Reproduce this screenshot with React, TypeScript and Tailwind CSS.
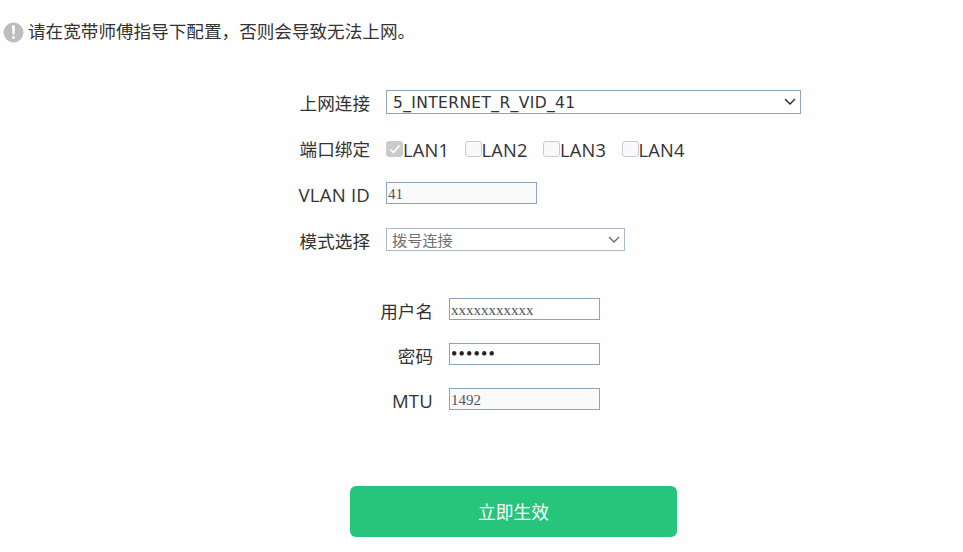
import { useState } from "react";
import type { ReactNode } from "react";

const PORTS = ["LAN1", "LAN2", "LAN3", "LAN4"];

export default function App() {
  const [username, setUsername] = useState("xxxxxxxxxxx");
  const [password, setPassword] = useState("xxxxxx");

  return (
    <div className="h-[552px] w-[963px] overflow-hidden bg-[#fefefe] font-['Open_Sans','Noto_Sans_CJK_SC',sans-serif] text-[17.6px] leading-6 text-[#333]">
      <div className="flex items-center gap-1 pt-[19px] pl-[3px]">
        <NoticeIcon />
        <p className="font-['Noto_Sans_CJK_SC',sans-serif]">请在宽带师傅指导下配置，否则会导致无法上网。</p>
      </div>

      <form onSubmit={(e) => e.preventDefault()}>
        <div className="pt-[47px]">
          <Row label="上网连接" labelWidth="w-[370px]" height="h-[46px]">
            <Select value="5_INTERNET_R_VID_41" className="h-6 w-[415px] border-[#8ea4b8] pl-1.5 font-['DejaVu_Sans',sans-serif] text-[15.5px] tracking-[0.37px] text-[#333]" />
          </Row>
          <Row label="端口绑定" labelWidth="w-[370px]" height="h-[46px]">
            <div className="flex pt-[5px]">
              {PORTS.map((port, i) => (
                <label key={port} className="flex w-[78.5px] items-start">
                  <Checkbox checked={i === 0} />
                  <span className="text-[18.3px] leading-[18px] tracking-[0.2px]">{port}</span>
                </label>
              ))}
            </div>
          </Row>
          <Row label="VLAN ID" labelWidth="w-[370px]" height="h-[46px]" latin>
            <TextInput value="41" disabled />
          </Row>
          <Row label="模式选择" labelWidth="w-[370px]" height="h-[46px]">
            <Select value="拨号连接" disabled className="h-[23px] w-[239px] border-[#a9b9ca] pl-[5px] font-['Noto_Sans_CJK_SC',sans-serif] text-[15.2px] leading-[21px] text-[#707070]" />
          </Row>
        </div>

        <div className="pt-6">
          <Row label="用户名" labelWidth="w-[433px]" height="h-[45px]">
            <TextInput value={username} onChange={setUsername} />
          </Row>
          <Row label="密码" labelWidth="w-[433px]" height="h-[45px]">
            <TextInput type="password" value={password} onChange={setPassword} />
          </Row>
          <Row label="MTU" labelWidth="w-[433px]" height="h-[45px]" latin>
            <TextInput value="1492" disabled />
          </Row>
        </div>

        <button className="mt-[53px] ml-[350px] block h-[51px] w-[327px] rounded-md bg-[#27c57c] text-[17.8px] text-white">
          立即生效
        </button>
      </form>
    </div>
  );
}

function Row({ label, labelWidth, height, latin, children }: { label: string; labelWidth: string; height: string; latin?: boolean; children: ReactNode }) {
  return (
    <div className={`flex items-start gap-4 ${height}`}>
      <div className={`shrink-0 pt-px text-right ${labelWidth} ${latin ? "text-[18.6px] tracking-[0.2px]" : ""}`}>{label}</div>
      {children}
    </div>
  );
}

function TextInput({ value, type = "text", disabled, onChange }: { value: string; type?: string; disabled?: boolean; onChange?: (v: string) => void }) {
  return (
    <input
      type={type}
      value={value}
      disabled={disabled}
      onChange={(e) => onChange?.(e.target.value)}
      className={`h-[22px] w-[151px] border border-[#8ea4b8] px-px font-['Liberation_Serif',serif] outline-none ${disabled ? "bg-[#fafafc]" : "bg-white"} ${type === "password" ? "text-[18px] tracking-[1.2px] text-[#222]" : "pt-0.5 text-[15px] text-[#555]"}`}
    />
  );
}

function Select({ value, disabled, className }: { value: string; disabled?: boolean; className: string }) {
  return (
    <div className="relative flex">
      <select disabled={disabled} className={`appearance-none border bg-white opacity-100 outline-none ${className}`}>
        <option>{value}</option>
      </select>
      <svg className="pointer-events-none absolute top-2 right-[5px] h-2 w-3" viewBox="0 0 12 8" fill="none" stroke={disabled ? "#666" : "#222"} strokeWidth="1.3">
        <path d="M1 1 6 6 11 1" />
      </svg>
    </div>
  );
}

function Checkbox({ checked }: { checked: boolean }) {
  return (
    <span className={`flex h-4 w-[17px] items-center justify-center rounded-[3px] border border-[#cbcbcb] ${checked ? "bg-[#cbcbcb]" : "bg-[#f9f9fb]"}`}>
      {checked && (
        <svg className="h-3 w-3" viewBox="0 0 12 12" fill="none" stroke="#fff" strokeWidth="1.7">
          <path d="M1.5 6.5 4.5 9.5 10.5 2.5" />
        </svg>
      )}
    </span>
  );
}

function NoticeIcon() {
  return (
    <svg className="mt-0.5 h-[21px] w-[21px]" viewBox="0 0 21 21">
      <circle cx="10.5" cy="10.5" r="10" fill="#bdbdbd" />
      <path d="M9 3.5h3l-.5 9h-2z" fill="#fff" />
      <circle cx="10.5" cy="15.5" r="1.5" fill="#fff" />
    </svg>
  );
}
